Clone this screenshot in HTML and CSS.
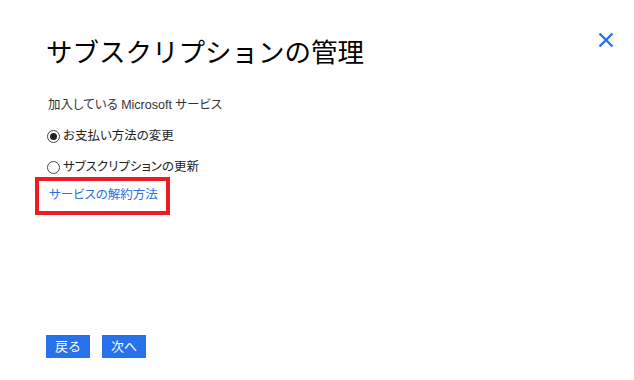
FILE: index.html
```html
<!DOCTYPE html>
<html lang="ja">
<head>
  <meta charset="UTF-8">
  <meta name="viewport" content="width=device-width, initial-scale=1.0">
  <title>サブスクリプションの管理</title>
  <link rel="stylesheet" href="styles.css">
</head>
<body>
  <div class="dialog">
    <div class="header">
      <h1>サブスクリプションの管理</h1>
      <button class="close" aria-label="閉じる">
        <svg width="16" height="16" viewBox="0 0 16 16">
          <path d="M1.5 1.5 L14.5 14.5 M14.5 1.5 L1.5 14.5" stroke="#2672ec" stroke-width="2.4" fill="none"/>
        </svg>
      </button>
    </div>

    <p class="subtitle">加入している Microsoft サービス</p>

    <label class="option">
      <span class="radio checked"></span>お支払い方法の変更
    </label>
    <label class="option">
      <span class="radio"></span>サブスクリプションの更新
    </label>

    <div class="highlight">
      <a href="#" class="link">サービスの解約方法</a>
    </div>

    <div class="actions">
      <button class="button">戻る</button>
      <button class="button">次へ</button>
    </div>
  </div>
</body>
</html>
```

FILE: styles.css
```css
html, body {
  margin: 0;
  padding: 0;
  background: #fff;
}
body {
  font-family: "Liberation Sans", "Noto Sans CJK JP", sans-serif;
  color: #222;
  font-size: 12.5px;
  font-feature-settings: "palt";
}
.dialog {
  display: flex;
  flex-direction: column;
  height: 380px;
  box-sizing: border-box;
  padding: 0 20px 22px 46px;
}
.header {
  display: flex;
  justify-content: space-between;
  align-items: flex-start;
}
h1 {
  margin: 33px 0 0;
  font-family: "Noto Sans CJK JP", sans-serif;
  font-size: 26.5px;
  line-height: 36px;
  font-weight: normal;
  color: #000;
  font-feature-settings: normal;
}
.close {
  margin-top: 32px;
  padding: 0;
  border: none;
  background: none;
  width: 16px;
  height: 16px;
  cursor: pointer;
}
.close svg {
  display: block;
}
.subtitle {
  margin: 26px 0 0 2px;
  line-height: 20px;
  color: #333;
}
.option {
  display: flex;
  align-items: center;
  gap: 3px;
  margin-top: 11px;
  line-height: 20px;
  color: #222;
}
.radio {
  width: 13px;
  height: 13px;
  margin-left: 1px;
  box-sizing: border-box;
  border: 1px solid #444;
  border-radius: 50%;
  display: flex;
  align-items: center;
  justify-content: center;
}
.radio.checked::after {
  content: "";
  width: 7px;
  height: 7px;
  border-radius: 50%;
  background: #222;
}
.highlight {
  align-self: flex-start;
  box-sizing: border-box;
  margin: 0 0 0 -11px;
  width: 135px;
  border: 4px solid #ed1c24;
  padding: 7px 0 9px 10px;
  line-height: 14px;
  white-space: nowrap;
}
.link {
  color: #2672ec;
  text-decoration: none;
}
.actions {
  margin-top: auto;
  display: flex;
  gap: 12px;
}
.button {
  height: 23px;
  min-width: 44px;
  padding: 0 9px;
  border: none;
  background: #2672ec;
  color: #fff;
  font-family: inherit;
  font-size: 13px;
  line-height: 23px;
  cursor: pointer;
}
```
